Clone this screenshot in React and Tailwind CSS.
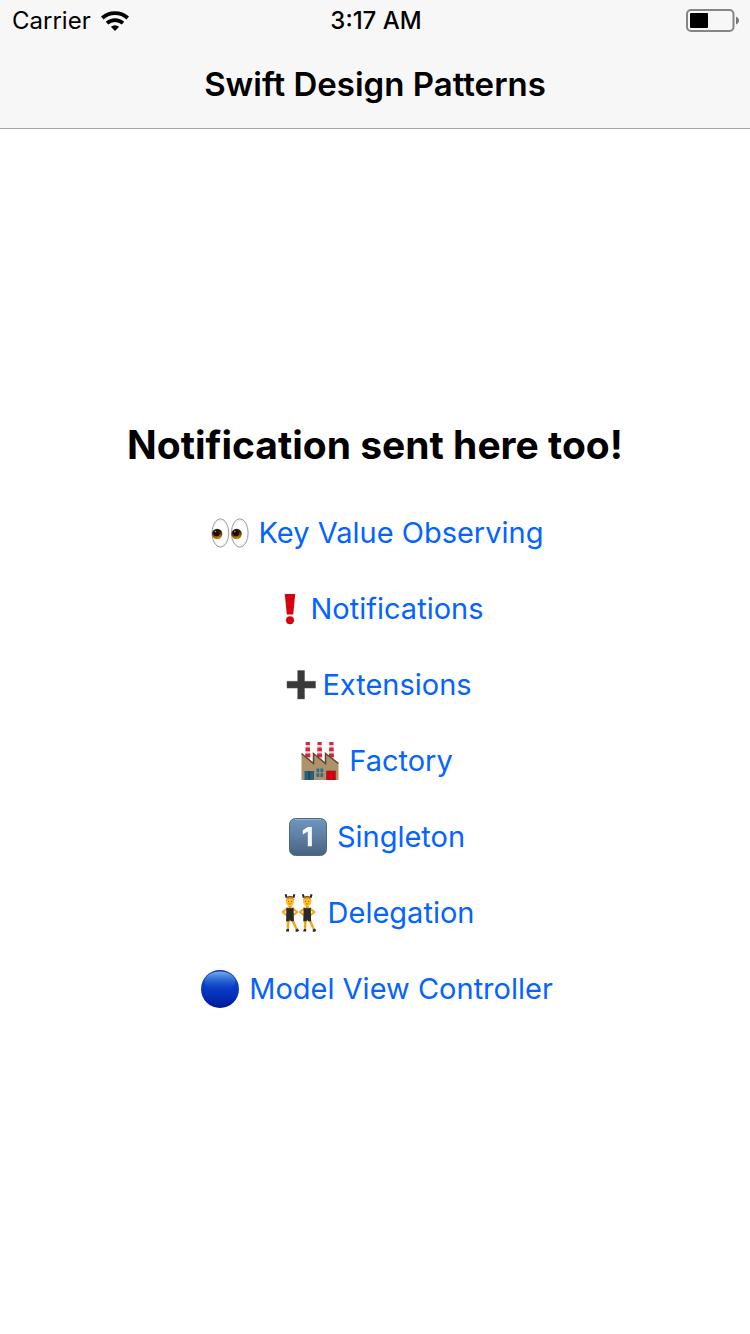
import React from "react";

const iconClass = "h-[38px] w-[38px] shrink-0";

function EyesIcon() {
  const eye = (x) => (
    <g key={x}>
      <ellipse cx={x} cy="19" rx="8.4" ry="14.2" fill="url(#eyeWhite)" stroke="#a3a3a3" strokeWidth="1" />
      <circle cx={x - 3.2} cy="20" r="5.2" fill="url(#iris)" />
      <circle cx={x - 3.8} cy="19.2" r="3" fill="#1c0a02" />
      <circle cx={x - 5} cy="17.6" r="0.8" fill="#a89080" />
    </g>
  );
  return (
    <svg className={iconClass} viewBox="0 0 38 38" aria-hidden="true">
      <defs>
        <radialGradient id="eyeWhite">
          <stop offset="0.75" stopColor="#fff" />
          <stop offset="1" stopColor="#e9e9ec" />
        </radialGradient>
        <linearGradient id="iris" x1="0" y1="0" x2="0.2" y2="1">
          <stop offset="0.4" stopColor="#3a1a04" />
          <stop offset="1" stopColor="#c9860f" />
        </linearGradient>
      </defs>
      {[9.4, 28.8].map(eye)}
    </svg>
  );
}

function ExclamationIcon() {
  return (
    <svg className={iconClass} viewBox="0 0 38 38" aria-hidden="true">
      <path d="M13.8 4h10.4l-2 20.5h-6.4z" fill="#d6000f" />
      <circle cx="19" cy="30.2" r="4" fill="#d6000f" />
    </svg>
  );
}

function PlusIcon() {
  return (
    <svg className={iconClass} viewBox="0 0 38 38" aria-hidden="true">
      <path d="M15.7 4.5h6.8v10.8h11v6.8h-11v10.8h-6.8V22.1H5v-6.8h10.7z" fill="#393939" stroke="#555" strokeWidth="0.5" />
    </svg>
  );
}

function FactoryIcon() {
  return (
    <svg className={iconClass} viewBox="0 0 38 38" aria-hidden="true">
      {[6.8, 18.6, 30.4].map((x) => (
        <g key={x}>
          <path d={`M${x - 2} 0h4l.7 17h-5.4z`} fill="#e2d6d8" />
          <path d={`M${x - 2} 0h4l.1 3h-4.2zM${x - 2.2} 5.5h4.4l.1 3.7h-4.6zM${x - 2.4} 11.5h4.8l.2 3.7h-5.2z`} fill="#dc2138" />
        </g>
      ))}
      <path d="M.5 11.5 12.5 21.5V11.5l12 10v-10l13 10V38H.5z" fill="#ae926b" />
      <path d="m.5 11.5 12 10v-10l12 10v-10l13 10" fill="none" stroke="#59462f" strokeWidth="1.5" />
      <path d="M3.5 29H13v9H3.5z" fill="#28607c" />
      <path d="M8.2 29v9" stroke="#17394b" strokeWidth="1" />
      <path d="M15.5 26.5h2.8v3.7h-2.8zM19.4 26.5h2.8v3.7h-2.8zM15.5 31.3h2.8V35h-2.8zM19.4 31.3h2.8V35h-2.8z" fill="#28708f" />
      <path d="M25.5 29h9v9h-9z" fill="#d50013" stroke="#8b281f" strokeWidth="0.7" />
    </svg>
  );
}

function KeycapOneIcon() {
  return (
    <svg className={iconClass} viewBox="0 0 38 38" aria-hidden="true">
      <defs>
        <linearGradient id="keycap" x1="0" y1="0" x2="0" y2="1">
          <stop offset="0" stopColor="#6f96bb" />
          <stop offset="0.5" stopColor="#5d7fa3" />
          <stop offset="1" stopColor="#48617f" />
        </linearGradient>
      </defs>
      <rect x="0.5" y="0.5" width="37" height="37" rx="6" fill="url(#keycap)" stroke="#4d6a89" strokeWidth="1" />
      <path d="M6 1.6h26" stroke="#9bb9d3" strokeWidth="0.8" />
      <path d="M18.7 9h4.2v19.2h-4.1V13.4l-5 3v-4.1z" fill="#f4f6f8" />
    </svg>
  );
}

function DancersIcon() {
  const dancer = (x) => (
    <g key={x} transform={`translate(${x} 0)`}>
      <path d="M-3.4 3.6-4.4.3M3.4 3.6 4.4.3" fill="none" stroke="#262626" strokeWidth="2" />
      <path d="M-3.2 14.8-7.3 18l4 3.3M3.2 14.8 7.3 18l-4 3.3" fill="none" stroke="#f4a51c" strokeWidth="2.1" strokeLinejoin="round" />
      <path d="M-3.4 25H-.4l-.6 11h-2.2zM.4 25h3.2l4 10-1.8 1z" fill="#f4a51c" />
      <path d="M-1.6 10h3.2v5h-3.2z" fill="#e7930f" />
      <ellipse cx="0" cy="7.5" rx="4.1" ry="5" fill="#ffbf2b" />
      <path d="M-4.1 6.8C-4.2 1.4 4.2 1.4 4.1 6.8L2.5 4.8h-5z" fill="#d98d12" />
      <path d="M-3.6 3.4q3.6-2.2 7.2 0" fill="none" stroke="#4a3212" strokeWidth="0.9" />
      <circle cx="-1.5" cy="7.2" r="0.5" fill="#5b3010" />
      <circle cx="1.5" cy="7.2" r="0.5" fill="#5b3010" />
      <path d="M-1.3 9.6q1.3 1 2.6 0" fill="none" stroke="#a84612" strokeWidth="0.6" />
      <path d="M-3.6 13.3-1.6 14.3h3.2l2-1 .3 14H.6L0 25.5l-.6 1.8h-3.3z" fill="#292928" />
      <path d="M-3.4 35h2.4v2.6h-3zM5.7 35.4l2-.9 1.3 2-1.3 1.3H5.5z" fill="#292928" />
    </g>
  );
  return (
    <svg className={iconClass} viewBox="0 0 38 38" aria-hidden="true">
      {[10, 27.2].map(dancer)}
    </svg>
  );
}

function BlueCircleIcon() {
  return (
    <svg className={iconClass} viewBox="0 0 38 38" aria-hidden="true">
      <defs>
        <linearGradient id="ball" x1="0" y1="0" x2="0" y2="1">
          <stop offset="0" stopColor="#0a3ba0" />
          <stop offset="0.25" stopColor="#0b46c4" />
          <stop offset="0.6" stopColor="#0634c0" />
          <stop offset="1" stopColor="#001b94" />
        </linearGradient>
        <linearGradient id="shine" x1="0" y1="0" x2="0" y2="1">
          <stop offset="0" stopColor="#75b0f5" />
          <stop offset="1" stopColor="#0b46c4" stopOpacity="0" />
        </linearGradient>
      </defs>
      <circle cx="19" cy="19" r="19" fill="url(#ball)" />
      <ellipse cx="19" cy="11.5" rx="15.5" ry="10" fill="url(#shine)" />
    </svg>
  );
}

function WifiIcon() {
  return (
    <svg className="h-[22px] w-7" viewBox="0 0 28 22" aria-hidden="true">
      <path d="M1.3 8A19 19 0 0 1 26.7 8" fill="none" stroke="#000" strokeWidth="3.9" />
      <path d="M6 13.2a12 12 0 0 1 16 0" fill="none" stroke="#000" strokeWidth="3.7" />
      <path d="M14 21l-4.1-4.2a6 6 0 0 1 8.2 0z" fill="#000" />
    </svg>
  );
}

function BatteryIcon() {
  return (
    <svg className="h-6 w-[54px]" viewBox="0 0 54 24" role="img" aria-label="Battery">
      <rect x="1" y="1" width="46.5" height="21" rx="4" fill="none" stroke="#858585" strokeWidth="2" />
      <rect x="4" y="4" width="18" height="15" rx="1" fill="#000" />
      <path d="M50 7.5c4 1.5 4 6.5 0 8z" fill="#777" />
    </svg>
  );
}

const patterns = [
  { label: "Key Value Observing", Icon: EyesIcon, gap: "gap-2.5" },
  { label: "Notifications", Icon: ExclamationIcon, gap: "gap-0.5" },
  { label: "Extensions", Icon: PlusIcon, gap: "gap-0.5" },
  { label: "Factory", Icon: FactoryIcon, gap: "gap-2.5" },
  { label: "Singleton", Icon: KeycapOneIcon, gap: "gap-2.5" },
  { label: "Delegation", Icon: DancersIcon, gap: "gap-2.5" },
  { label: "Model View Controller", Icon: BlueCircleIcon, gap: "gap-2.5" },
];

export default function App() {
  return (
    <div className="min-h-screen bg-white font-['Inter','Liberation_Sans',sans-serif] text-black">
      <header className="border-b border-[#a7a7aa] bg-[#f7f7f7]">
        <div className="grid h-[42px] grid-cols-3 items-center pl-3 pr-[10px] text-2xl">
          <div className="flex items-center gap-2.5">
            <span>Carrier</span>
            <WifiIcon />
          </div>
          <time className="text-center font-medium">3:17 AM</time>
          <div className="flex justify-end">
            <BatteryIcon />
          </div>
        </div>
        <h1 className="flex h-[86px] items-center justify-center text-[33px] font-semibold">
          Swift Design Patterns
        </h1>
      </header>
      <main className="flex flex-col items-center gap-[34px] pt-73">
        <h2 className="text-center text-[39px] leading-[48px] font-bold">Notification sent here too!</h2>
        <nav className="flex flex-col items-center gap-4 pl-1" aria-label="Design patterns">
          {patterns.map(({ label, Icon, gap }) => (
            <button key={label} type="button" className={`flex h-15 items-center text-[29px] text-[#0563ff] ${gap}`}>
              <Icon />
              <span>{label}</span>
            </button>
          ))}
        </nav>
      </main>
    </div>
  );
}
